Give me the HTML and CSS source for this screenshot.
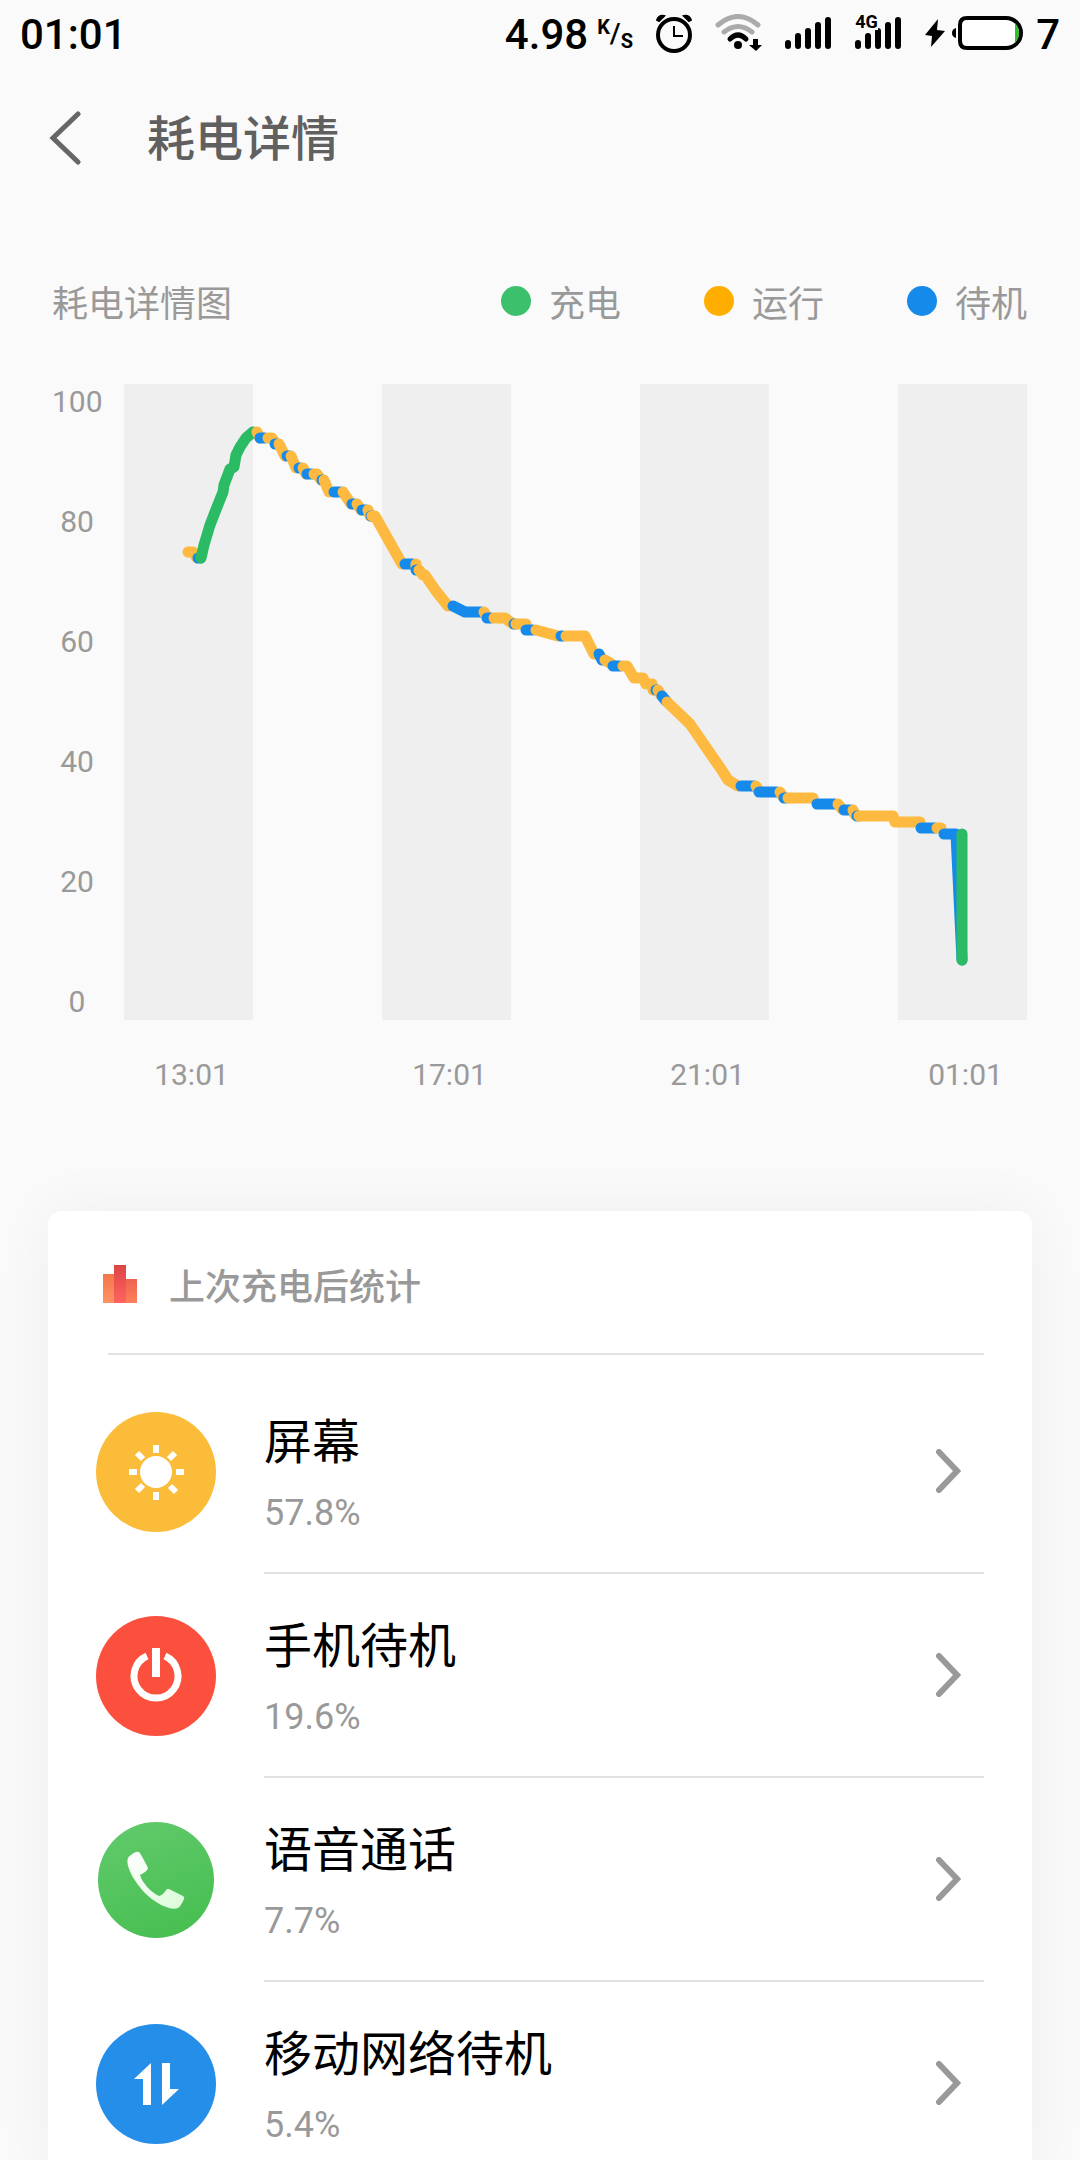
FILE: index.html
```html
<!DOCTYPE html>
<html lang="zh-CN">
<head>
  <meta charset="UTF-8">
  <meta name="viewport" content="width=device-width, initial-scale=1">
  <title>耗电详情</title>
  <link rel="stylesheet" href="styles.css">
</head>
<body>

  <div class="status-bar">
    <span class="clock">01:01</span>
    <div class="status-icons">
      <div class="speed">
        <span>4.98</span>
        <span class="unit"><span class="unit-top">K</span><span class="unit-slash">/</span><span class="unit-bottom">S</span></span>
      </div>
      <svg width="36" height="40" viewBox="0 0 36 40" fill="none" stroke="#000">
        <circle cx="18" cy="21" r="16" stroke-width="4"/>
        <path d="M18 12v10h9" stroke-width="2"/>
        <path d="M1 6Q3 1 8 2L3 7zM35 6Q33 1 28 2L33 7z" fill="#000" stroke-width="2"/>
      </svg>
      <svg width="47" height="40" viewBox="0 0 47 40" fill="none" stroke-linecap="round" stroke-width="5">
        <path d="M3 11Q23 -6 43 11M9 18Q23 7 37 18" stroke="#aaa"/>
        <path d="M15 25Q23 17 31 25" stroke="#000"/>
        <circle cx="23" cy="31" r="4" fill="#000"/>
        <path d="M38 25h5v6h4l-6 6-7-6h4z" fill="#000"/>
      </svg>
      <svg width="47" height="40" viewBox="0 0 47 40" stroke="#000" stroke-width="6" stroke-linecap="round">
        <path d="M3 29v3M13 22v10M23 17v15M33 11v21M43 6v26"/>
      </svg>
      <div class="signal-4g">
        <svg width="47" height="40" viewBox="0 0 47 40" stroke="#000" stroke-width="6" stroke-linecap="round">
          <path d="M3 29v3M13 22v10M23 17v15M33 11v21M43 6v26"/>
        </svg>
        <span>4G</span>
      </div>
      <div class="battery">
        <svg width="102" height="40" viewBox="0 0 102 40">
          <path d="M13 5L0 21l7 1-1 11L20 17l-8-1z"/>
          <path d="M31 14v10q-4-1-4-5t4-5z"/>
          <path d="M42 4h39a15 15 0 0 1 0 30H42q-7 0-7-7V11q0-7 7-7z" fill="#fff" stroke="#000" stroke-width="4"/>
          <path d="M90 9q4 4 4 10t-4 10z" fill="#2fc02f"/>
        </svg>
        <span>7</span>
      </div>
    </div>
  </div>

  <header class="title-bar">
    <button class="back" aria-label="返回">
      <svg width="34" height="54" viewBox="0 0 34 54"><path d="M29 3L4 27l25 24"/></svg>
    </button>
    <h1>耗电详情</h1>
  </header>

  <section class="usage">
    <div class="usage-head">
      <h2>耗电详情图</h2>
      <ul class="legend">
        <li class="charging">充电</li>
        <li class="running">运行</li>
        <li class="standby">待机</li>
      </ul>
    </div>

    <div class="chart">
      <div class="y-axis">
        <span>100</span><span>80</span><span>60</span><span>40</span><span>20</span><span>0</span>
      </div>
      <!-- 6 units = 1% battery, one band = 2 hours -->
      <svg class="plot" viewBox="124 384 903 636">
        <g class="bands">
          <rect x="124" y="384" width="129" height="636"/>
          <rect x="382" y="384" width="129" height="636"/>
          <rect x="640" y="384" width="129" height="636"/>
          <rect x="898" y="384" width="129" height="636"/>
        </g>
        <g class="level">
          <path class="run" d="M188 552h5l4 6"/>
          <path class="idle" d="M198 558h2"/>
          <path class="charge" d="M201 558L204 545L210 525L217 507L223 492L224 485L230 469L234 467L236 455L240 447L246 438L253 432"/>
          <path class="run" d="M257 432l3 6"/>
          <path class="idle" d="M260 438h5"/>
          <path class="run" d="M268 438h4l4 6"/>
          <path class="idle" d="M275 444h2"/>
          <path class="run" d="M279 444l6 12"/>
          <path class="idle" d="M287 456h3"/>
          <path class="run" d="M291 456l5 12"/>
          <path class="idle" d="M299 468h2"/>
          <path class="run" d="M303 468l3 6"/>
          <path class="idle" d="M307 474h5"/>
          <path class="run" d="M314 474h3l4 6"/>
          <path class="idle" d="M322 480h1"/>
          <path class="run" d="M324 480l5 12"/>
          <path class="idle" d="M334 492h7"/>
          <path class="run" d="M343 492l8 12"/>
          <path class="idle" d="M352 504h3"/>
          <path class="run" d="M357 504l4 6"/>
          <path class="idle" d="M362 510h4"/>
          <path class="run" d="M368 510l2 6"/>
          <path class="idle" d="M371 516h1"/>
          <path class="run" d="M372 516h3L402 564"/>
          <path class="idle" d="M405 564h8"/>
          <path class="run" d="M416 564v3"/>
          <path class="idle" d="M416 570h1"/>
          <path class="run" d="M419 570l4 5h2L436 591L448 606"/>
          <path class="idle" d="M453 606l12 6h16"/>
          <path class="run" d="M484 612l3 5"/>
          <path class="idle" d="M487 618h4"/>
          <path class="run" d="M494 618h11l8 6"/>
          <path class="idle" d="M514 624h1"/>
          <path class="run" d="M516 624h10"/>
          <path class="idle" d="M526 630h7"/>
          <path class="run" d="M536 630l22 6"/>
          <path class="idle" d="M561 636h2"/>
          <path class="run" d="M566 636h19l9 18"/>
          <path class="idle" d="M599 654l3 6"/>
          <path class="run" d="M605 660l8 5"/>
          <path class="idle" d="M613 666h7"/>
          <path class="run" d="M623 666h4l7 12h9l3 6h6l1 6"/>
          <path class="idle" d="M656 690h1"/>
          <path class="run" d="M658 690l3 5"/>
          <path class="idle" d="M662 696l4 5"/>
          <path class="run" d="M667 702L690 724L723 772L728 780L738 786"/>
          <path class="idle" d="M741 786h13"/>
          <path class="run" d="M756 786l3 5"/>
          <path class="idle" d="M759 792h18"/>
          <path class="run" d="M780 792l3 5"/>
          <path class="idle" d="M784 798h2"/>
          <path class="run" d="M788 798h25"/>
          <path class="idle" d="M817 804h18"/>
          <path class="run" d="M838 804l4 5"/>
          <path class="idle" d="M844 810h7"/>
          <path class="run" d="M853 810l2 5"/>
          <path class="idle" d="M857 816h1"/>
          <path class="run" d="M859 816h34l2 6h25"/>
          <path class="idle" d="M921 828h14"/>
          <path class="run" d="M937 828h4"/>
          <path class="idle" d="M944 834h12l6 126"/>
          <path class="charge" d="M962 834v126"/>
        </g>
      </svg>
      <div class="x-axis">
        <span>13:01</span><span>17:01</span><span>21:01</span><span>01:01</span>
      </div>
    </div>
  </section>

  <section class="card">
    <div class="card-head">
      <svg width="34" height="38" viewBox="0 0 34 38">
        <defs>
          <linearGradient id="g1" x2="0" y2="1"><stop stop-color="#f4764a"/><stop offset="1" stop-color="#ff9363"/></linearGradient>
          <linearGradient id="g2" x2="0" y2="1"><stop stop-color="#dc4444"/><stop offset="1" stop-color="#ff6460"/></linearGradient>
          <linearGradient id="g3" x2="0" y2="1"><stop stop-color="#ee6150"/><stop offset="1" stop-color="#fd8259"/></linearGradient>
        </defs>
        <path d="M0 9h11v29H0z" fill="url(#g1)"/>
        <path d="M11 0h12v38H11z" fill="url(#g2)"/>
        <path d="M23 14h11v24H23z" fill="url(#g3)"/>
      </svg>
      <h2>上次充电后统计</h2>
    </div>

    <a class="item" href="#">
      <svg class="icon" viewBox="0 0 120 120">
        <circle cx="60" cy="60" r="60" fill="#fbbc3a"/>
        <circle cx="60" cy="60" r="16" fill="#fff"/>
        <path d="M60 33v8M60 80v8M33 60h8M80 60h8M41 41l6 6M74 74l6 6M79 41l-6 6M47 73l-6 6" stroke="#fff" stroke-width="6"/>
      </svg>
      <div class="item-body">
        <div class="item-text"><h3>屏幕</h3><p>57.8%</p></div>
        <svg class="arrow" viewBox="0 0 26 44"><path d="M4 3l18 19L4 41"/></svg>
      </div>
    </a>

    <a class="item" href="#">
      <svg class="icon" viewBox="0 0 120 120">
        <circle cx="60" cy="60" r="60" fill="#fc503e"/>
        <path d="M51 40A22 22 0 1 0 69 40" fill="none" stroke="#fff" stroke-width="7"/>
        <path d="M60 32v29" stroke="#fff" stroke-width="8"/>
      </svg>
      <div class="item-body">
        <div class="item-text"><h3>手机待机</h3><p>19.6%</p></div>
        <svg class="arrow" viewBox="0 0 26 44"><path d="M4 3l18 19L4 41"/></svg>
      </div>
    </a>

    <a class="item" href="#">
      <svg class="icon" viewBox="0 0 120 120">
        <defs>
          <linearGradient id="g4" x1="0" y1="0" x2="0.4" y2="1"><stop stop-color="#62ca6c"/><stop offset="1" stop-color="#4ac054"/></linearGradient>
          <linearGradient id="g5" x1="0" y1="0" x2="1" y2="1"><stop stop-color="#fff"/><stop offset="1" stop-color="#d9fbd7"/></linearGradient>
        </defs>
        <circle cx="60" cy="60" r="58" fill="url(#g4)"/>
        <path d="M35 35Q40 31 43 32Q45 34 52 48Q52 51 44 55C46 63 56 73 63 76Q66 76 71 69L73 69L87 76Q89 77 88 79Q85 86 82 88C75 91 60 84 50 74C38 62 29 45 32 38Q33 36 35 35z" fill="url(#g5)"/>
      </svg>
      <div class="item-body">
        <div class="item-text"><h3>语音通话</h3><p>7.7%</p></div>
        <svg class="arrow" viewBox="0 0 26 44"><path d="M4 3l18 19L4 41"/></svg>
      </div>
    </a>

    <a class="item" href="#">
      <svg class="icon" viewBox="0 0 120 120">
        <circle cx="60" cy="60" r="60" fill="#258ee8"/>
        <path d="M55 39v42h-8V55h-9zM66 39h8v26h9L66 81z" fill="#fff"/>
      </svg>
      <div class="item-body">
        <div class="item-text"><h3>移动网络待机</h3><p>5.4%</p></div>
        <svg class="arrow" viewBox="0 0 26 44"><path d="M4 3l18 19L4 41"/></svg>
      </div>
    </a>
  </section>

</body>
</html>
```
FILE: styles.css
```css
* {
  box-sizing: border-box;
}

body {
  margin: 0;
  height: 100vh;
  overflow-x: hidden;
  overflow-y: auto;
  scrollbar-width: none;
  background: #fafafa;
  color: #999;
  font-family: Roboto, "Noto Sans CJK SC", sans-serif;
  font-size: 36px;
}

h1, h2, h3, p, ul {
  margin: 0;
  padding: 0;
}

svg {
  display: block;
  flex: none;
}

/* status bar */
.status-bar {
  display: flex;
  align-items: center;
  justify-content: space-between;
  height: 68px;
  padding: 0 20px;
  color: #000;
  font-size: 42px;
  font-weight: 500;
}

.status-icons,
.speed,
.battery {
  display: flex;
  align-items: center;
}

.status-icons {
  gap: 23px;
}

.speed,
.battery {
  gap: 9px;
}

.unit {
  display: flex;
  height: 34px;
  font-size: 20px;
  font-weight: 700;
  line-height: 20px;
}

.unit-slash {
  align-self: center;
  font-size: 28px;
  font-weight: 500;
}

.unit-bottom {
  align-self: flex-end;
}

.signal-4g {
  position: relative;
}

.signal-4g span {
  position: absolute;
  top: 0;
  left: 0;
  background: #fafafa;
  font-size: 18px;
  font-weight: 700;
  line-height: 16px;
}

/* title */
.title-bar {
  display: flex;
  align-items: center;
  gap: 64px;
  height: 140px;
  padding: 0 49px;
}

.back {
  padding: 0;
  border: none;
  background: none;
  cursor: pointer;
}

.back path,
.arrow path {
  fill: none;
  stroke: #666;
  stroke-width: 5;
  stroke-linecap: round;
}

h1 {
  padding-bottom: 6px;
  color: #606060;
  font-size: 48px;
  font-weight: 500;
}

/* chart */
.usage {
  padding: 66px 53px 0 52px;
}

.usage-head {
  display: flex;
  align-items: center;
  justify-content: space-between;
  height: 54px;
  margin-bottom: 56px;
}

h2 {
  font-size: 36px;
  font-weight: 400;
}

.legend {
  display: flex;
  gap: 83px;
  list-style: none;
}

.legend li {
  display: flex;
  align-items: center;
  gap: 18px;
}

.legend li::before {
  content: "";
  width: 30px;
  height: 30px;
  border-radius: 50%;
}

.charging::before {
  background: #3dc06c;
}

.running::before {
  background: #ffae00;
}

.standby::before {
  background: #168aeb;
}

.chart {
  display: grid;
  grid-template-columns: 50px 1fr;
  column-gap: 22px;
  font-size: 30px;
  line-height: 36px;
}

.y-axis {
  display: flex;
  flex-direction: column;
  justify-content: space-between;
  text-align: center;
}

.plot {
  width: 100%;
}

.bands {
  fill: #efefef;
}

.level {
  fill: none;
  stroke-width: 11;
  stroke-linecap: round;
  stroke-linejoin: round;
}

.run {
  stroke: #fdb940;
}

.idle {
  stroke: #168aeb;
}

.charge {
  stroke: #2bbb65;
}

.x-axis {
  grid-column: 2;
  display: grid;
  grid-template-columns: repeat(7, 1fr);
  margin-top: 37px;
  text-align: center;
}

.x-axis span {
  padding-left: 6px;
}

.x-axis span:nth-child(2) {
  grid-column: 3;
}

.x-axis span:nth-child(3) {
  grid-column: 5;
}

.x-axis span:nth-child(4) {
  grid-column: 7;
}

/* list */
.card {
  margin: 118px 48px 0;
  padding: 0 48px;
  border-radius: 14px;
  background: #fff;
  box-shadow: 0 0 60px rgba(0, 0, 0, 0.05);
}

.card-head {
  display: flex;
  align-items: center;
  gap: 32px;
  height: 144px;
  margin: 0 0 15px 12px;
  padding-top: 4px;
  border-bottom: 2px solid #e2e2e2;
}

.card-head svg {
  margin-left: -5px;
}

.card-head h2 {
  font-weight: 500;
}

.item {
  display: flex;
  align-items: center;
  gap: 48px;
  color: inherit;
  text-decoration: none;
}

.icon {
  width: 120px;
  height: 120px;
}

.item-body {
  flex: 1;
  display: flex;
  align-items: center;
  justify-content: space-between;
  height: 204px;
  padding-right: 23px;
  border-bottom: 2px solid #e2e2e2;
}

.item-text {
  padding-top: 4px;
}

h3 {
  color: #000;
  font-size: 48px;
  font-weight: 400;
  line-height: 80px;
}

.item p {
  line-height: 60px;
}

.arrow {
  width: 26px;
  height: 44px;
}

.arrow path {
  stroke: #999;
  stroke-width: 6;
}
```
